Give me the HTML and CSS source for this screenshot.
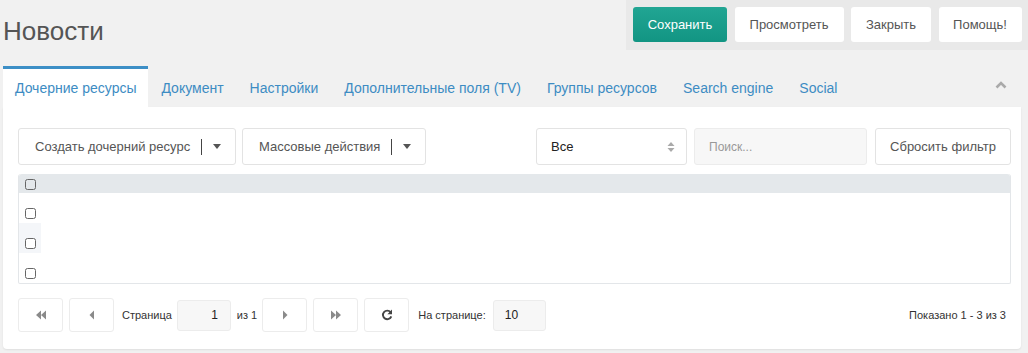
FILE: index.html
```html
<!DOCTYPE html>
<html lang="ru">
<head>
<meta charset="utf-8">
<title>Новости</title>
<link rel="stylesheet" href="styles.css">
</head>
<body>
<header class="top">
  <h1 class="title">Новости</h1>
  <div class="actions">
    <button class="abtn abtn-primary">Сохранить</button>
    <button class="abtn abtn-view">Просмотреть</button>
    <button class="abtn abtn-close">Закрыть</button>
    <button class="abtn abtn-help">Помощь!</button>
  </div>
</header>

<nav class="tabs">
  <a class="tab tab-active">Дочерние ресурсы</a>
  <a class="tab">Документ</a>
  <a class="tab">Настройки</a>
  <a class="tab">Дополнительные поля (TV)</a>
  <a class="tab">Группы ресурсов</a>
  <a class="tab">Search engine</a>
  <a class="tab">Social</a>
  <span class="collapse">
    <svg width="12" height="9" viewBox="0 0 12 9"><path d="M1.5 7.5 L6 3 L10.5 7.5" fill="none" stroke="#aaa" stroke-width="2.6"/></svg>
  </span>
</nav>

<section class="panel">
  <div class="toolbar">
    <button class="split split-create"><span class="split-label">Создать дочерний ресурс</span><span class="sep"></span><span class="caret"></span></button>
    <button class="split split-mass"><span class="split-label">Массовые действия</span><span class="sep"></span><span class="caret"></span></button>
    <div class="spacer"></div>
    <div class="select">
      <span>Все</span>
      <svg width="8" height="12" viewBox="0 0 8 12"><path d="M0.5 5 L4 1 L7.5 5 Z M0.5 7 L4 11 L7.5 7 Z" fill="#aaa"/></svg>
    </div>
    <div class="search">Поиск...</div>
    <button class="reset">Сбросить фильтр</button>
  </div>

  <div class="grid">
    <div class="grid-head"><span class="cb"></span></div>
    <div class="grid-row"><div class="cell"><span class="cb"></span></div></div>
    <div class="grid-row"><div class="cell cell-alt"><span class="cb"></span></div></div>
    <div class="grid-row"><div class="cell"><span class="cb"></span></div></div>
  </div>

  <div class="pager">
    <button class="pbtn">
      <svg width="12" height="10" viewBox="0 0 12 10"><path d="M6 0.5 V9.5 L1 5 Z M11 0.5 V9.5 L6 5 Z" fill="#8a8a8a"/></svg>
    </button>
    <button class="pbtn">
      <svg width="6" height="10" viewBox="0 0 6 10"><path d="M5 0.5 V9.5 L0.5 5 Z" fill="#8a8a8a"/></svg>
    </button>
    <span class="plabel">Страница</span>
    <div class="pinput pinput-page">1</div>
    <span class="plabel plabel-of">из 1</span>
    <button class="pbtn">
      <svg width="6" height="10" viewBox="0 0 6 10"><path d="M1 0.5 V9.5 L5.5 5 Z" fill="#8a8a8a"/></svg>
    </button>
    <button class="pbtn">
      <svg width="12" height="10" viewBox="0 0 12 10"><path d="M1 0.5 V9.5 L6 5 Z M6 0.5 V9.5 L11 5 Z" fill="#8a8a8a"/></svg>
    </button>
    <button class="pbtn">
      <svg width="12" height="12" viewBox="0 0 12 12"><path d="M9.6 3.2 A4.3 4.3 0 1 0 10.3 7.4" fill="none" stroke="#444" stroke-width="1.9"/><path d="M11 0.6 V5.2 H6.4 Z" fill="#444"/></svg>
    </button>
    <span class="plabel plabel-size">На странице:</span>
    <div class="pinput pinput-size">10</div>
    <span class="pinfo">Показано 1 - 3 из 3</span>
  </div>
</section>
</body>
</html>
```

FILE: styles.css
```css
* { box-sizing: border-box; }

body {
  margin: 0;
  background: #f1f1f1;
  font-family: "Liberation Sans", Arial, sans-serif;
  color: #555;
  width: 1028px;
  height: 353px;
  overflow: hidden;
}

button {
  font-family: inherit;
  cursor: pointer;
}

.top {
  display: flex;
  align-items: flex-start;
  height: 50px;
}

.title {
  margin: 16px 0 0 3px;
  font-size: 26px;
  line-height: 30px;
  font-weight: normal;
  color: #555;
}

.actions {
  margin-left: auto;
  width: 402px;
  height: 50px;
  background: #e9e9e9;
  display: flex;
  gap: 7.5px;
  padding: 7px 6px 0 7px;
}

.abtn {
  height: 35px;
  border: none;
  border-radius: 3px;
  background: #fff;
  color: #555;
  font-size: 13px;
  padding: 0;
}

.abtn-primary {
  width: 94px;
  background: linear-gradient(#21a593, #129583);
  color: #fff;
}
.abtn-view { width: 109px; }
.abtn-close { width: 80px; }
.abtn-help { width: 83px; }

.tabs {
  display: flex;
  align-items: stretch;
  height: 41px;
  margin: 16px 6px 0 3px;
}

.tab {
  display: flex;
  align-items: center;
  white-space: nowrap;
  padding: 0 13px 1px 13px;
  font-size: 14px;
  color: #3d8cc3;
  border-top: 3px solid transparent;
}

.tab-active {
  background: #fff;
  border-top-color: #3d8fc6;
  padding: 0 12px 1px 12px;
}

.collapse {
  margin-left: auto;
  display: flex;
  align-items: center;
  padding-right: 15px;
  padding-bottom: 4px;
}

.panel {
  margin: 0 7px 0 3px;
  background: #fff;
  border-radius: 0 0 4px 4px;
  box-shadow: 0 1px 2px rgba(0,0,0,0.08);
  padding: 21px 10px 17px 15px;
  height: 242px;
}

.toolbar {
  display: flex;
  align-items: stretch;
  height: 37px;
}

.split {
  display: flex;
  align-items: center;
  background: #fff;
  border: 1px solid #e3e3e3;
  border-radius: 3px;
  font-size: 13px;
  color: #555;
  padding: 0 0 0 16px;
}

.split-create { width: 218px; }
.split-mass { width: 184px; margin-left: 6px; }

.split-label { white-space: nowrap; }

.sep {
  width: 1px;
  height: 16px;
  background: #444;
  margin-left: 11px;
}

.caret {
  width: 0;
  height: 0;
  border-left: 4.5px solid transparent;
  border-right: 4.5px solid transparent;
  border-top: 5px solid #555;
  margin-left: 11px;
}

.spacer { flex: 1; }

.select {
  width: 151px;
  border: 1px solid #e3e3e3;
  border-radius: 3px;
  display: flex;
  align-items: center;
  justify-content: space-between;
  padding: 0 11px 0 14px;
  font-size: 13px;
  color: #222;
}

.search {
  width: 173px;
  margin-left: 7px;
  background: #f7f7f7;
  border: 1px solid #ececec;
  border-radius: 3px;
  display: flex;
  align-items: center;
  padding-left: 14px;
  font-size: 12px;
  color: #999;
}

.reset {
  width: 136px;
  margin-left: 8px;
  background: #fff;
  border: 1px solid #e3e3e3;
  border-radius: 3px;
  font-size: 13px;
  color: #555;
  padding: 0;
}

.grid {
  margin-top: 9px;
  border: 1px solid #e3e6e9;
  border-top: none;
  border-radius: 3px 3px 2px 2px;
  height: 110px;
}

.grid-head {
  height: 19px;
  background: #e4e8eb;
  border-radius: 3px 3px 0 0;
  display: flex;
  align-items: center;
  padding: 1px 0 0 6px;
}

.grid-row {
  height: 30px;
  display: flex;
}

.cell {
  width: 22px;
  display: flex;
  align-items: flex-start;
  padding: 15px 0 0 6px;
}

.cell-alt { background: #f4f6f9; }

.cb {
  width: 11px;
  height: 11px;
  border: 1.5px solid #666;
  border-radius: 2.5px;
  background: #fff;
  display: block;
}

.grid-head .cb { background: transparent; }

.pager {
  display: flex;
  align-items: center;
  margin-top: 14px;
  height: 34px;
}

.pbtn {
  width: 45px;
  height: 34px;
  background: #fff;
  border: 1px solid #ececec;
  border-radius: 3px;
  display: flex;
  align-items: center;
  justify-content: center;
  padding: 0;
  margin-right: 6px;
}

.plabel {
  font-size: 11px;
  color: #333;
  margin: 0 5px 0 2px;
}

.plabel-of { margin: 0 5px 0 6px; }
.plabel-size { margin: 0 7px 0 3px; }

.pinput {
  height: 31px;
  background: #f7f7f7;
  border: 1px solid #ececec;
  border-radius: 3px;
  display: flex;
  align-items: center;
  font-size: 12px;
  color: #222;
}

.pinput-page {
  width: 54px;
  justify-content: flex-end;
  padding-right: 12px;
}

.pinput-size {
  width: 53px;
  padding-left: 11px;
}

.pinfo {
  margin-left: auto;
  font-size: 11px;
  color: #333;
  padding-right: 5px;
}
```
